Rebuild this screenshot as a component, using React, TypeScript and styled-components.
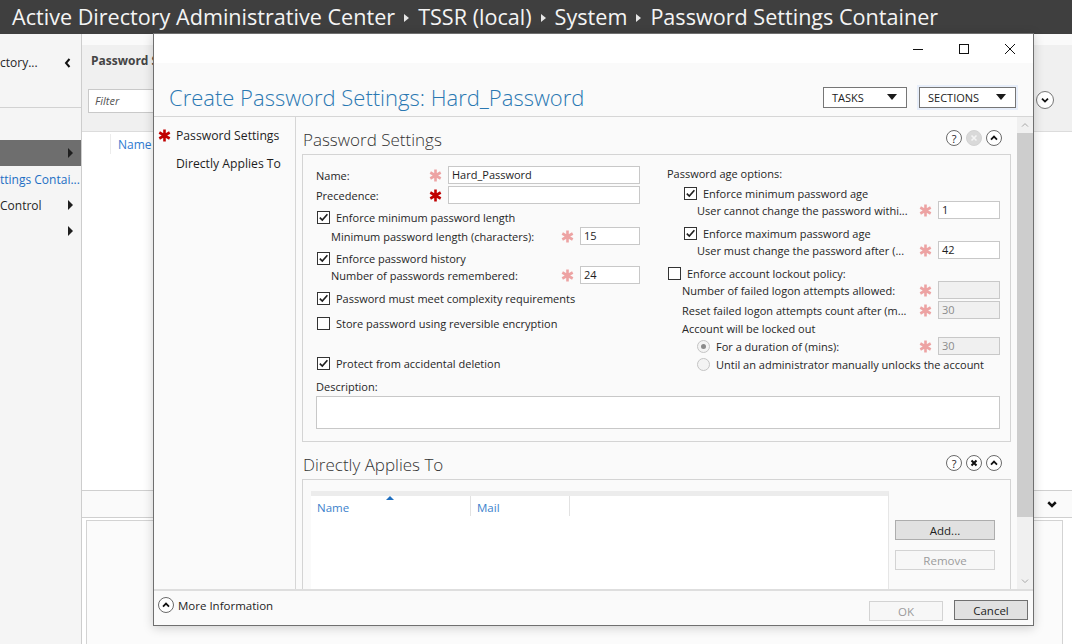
import React from "react";
import styled, { createGlobalStyle } from "styled-components";

const SANS = `"Open Sans", "Noto Sans", "Liberation Sans", sans-serif`;

const GlobalStyle = createGlobalStyle`
  * { box-sizing: border-box; }
  html, body { margin: 0; padding: 0; }
  body { font-family: ${SANS}; font-size: 11px; color: #262626; background: #f5f5f5; overflow: hidden; }
  #root { width: 1072px; height: 644px; }
`;

const Screen = styled.div`
  position: relative;
  width: 1072px;
  height: 644px;
  overflow: hidden;
  display: flex;
  flex-direction: column;
  background: #f5f5f5;
`;

/* ---------- top breadcrumb bar ---------- */
const TopBar = styled.header`
  height: 34px;
  flex: none;
  background: #3f3f3f;
  color: #f4f4f4;
  display: flex;
  align-items: center;
  padding-left: 12px;
  font-size: 21.6px;
  white-space: nowrap;
`;
const Crumb = styled.span`
  line-height: 34px;
`;
const CrumbCaret = styled.span`
  width: 0;
  height: 0;
  border-top: 4px solid transparent;
  border-bottom: 4px solid transparent;
  border-left: 5px solid #e6e6e6;
  margin: 2px 9px 0 9px;
`;

/* ---------- background console ---------- */
const Body = styled.div`
  flex: 1;
  display: flex;
  min-height: 0;
`;
const NavPane = styled.nav`
  width: 82px;
  flex: none;
  background: #f5f5f5;
  border-right: 1px solid #cdcdcd;
  display: flex;
  flex-direction: column;
  font-size: 12px;
`;
const NavHead = styled.div`
  height: 74px;
  border-bottom: 1px solid #d2d2d2;
  display: flex;
  justify-content: space-between;
  align-items: flex-start;
  padding: 20px 9px 0 0;
  margin-bottom: 32px;
  line-height: 18px;
  white-space: nowrap;
`;
const NavItem = styled.div<{ $selected?: boolean; $link?: boolean }>`
  height: 26px;
  display: flex;
  align-items: center;
  justify-content: space-between;
  padding-right: 8px;
  white-space: nowrap;
  overflow: hidden;
  background: ${(p) => (p.$selected ? "#6e6e6e" : "transparent")};
  color: ${(p) => (p.$link ? "#1d6fc4" : "#262626")};
`;
const NavCaret = styled.span`
  width: 0;
  height: 0;
  flex: none;
  border-top: 5px solid transparent;
  border-bottom: 5px solid transparent;
  border-left: 5px solid #1e1e1e;
`;
const MainPane = styled.section`
  flex: 1;
  min-width: 0;
  display: flex;
  flex-direction: column;
  background: #fff;
`;
const MainTitle = styled.div`
  height: 41px;
  flex: none;
  background: #f0f0f0;
  border-top: 11px solid #fafafa;
  padding-left: 9px;
  font-weight: 700;
  font-size: 12px;
  color: #444;
  display: flex;
  align-items: center;
`;
const FilterRow = styled.div`
  height: 57px;
  flex: none;
  background: #f0f0f0;
  border-bottom: 1px solid #dcdcdc;
  display: flex;
  justify-content: space-between;
  align-items: flex-start;
  padding: 14px 18px 0 6px;
`;
const FilterBox = styled.div`
  width: 300px;
  height: 24px;
  background: #fff;
  border: 1px solid #c9c9c9;
  font-style: italic;
  color: #555;
  padding-left: 6px;
  line-height: 22px;
`;
const ExpandCircle = styled.span`
  width: 18px;
  height: 18px;
  margin-top: 2px;
  border-radius: 50%;
  border: 1px solid #777;
  background: #fff;
  display: flex;
  align-items: center;
  justify-content: center;
`;
const ListHead = styled.div`
  height: 24px;
  flex: none;
  display: flex;
  align-items: center;
  font-size: 12px;
  color: #2f7bd0;
`;
const IconCol = styled.span`
  width: 29px;
  height: 20px;
  border-right: 1px solid #ececec;
  margin-right: 7px;
`;
const ListBody = styled.div`
  flex: 1;
`;
const DetailSection = styled.div`
  height: 154px;
  flex: none;
  border-top: 1px solid #cfcfcf;
  display: flex;
  flex-direction: column;
`;
const DetailBar = styled.div`
  height: 27px;
  flex: none;
  background: #fafafa;
  border-bottom: 1px solid #cfcfcf;
  display: flex;
  align-items: center;
  justify-content: flex-end;
  padding-right: 15px;
`;
const PreviewBox = styled.div`
  flex: 1;
  margin: 2px 9px 0 4px;
  border: 1px solid #d3d3d3;
  border-bottom: none;
  background: #fbfbfb;
`;

/* ---------- dialog ---------- */
const Dialog = styled.div`
  position: absolute;
  left: 153px;
  top: 33px;
  width: 881px;
  height: 593px;
  background: #fafafa;
  border: 1px solid #6f6f6f;
  display: flex;
  flex-direction: column;
  box-shadow: 0 2px 10px rgba(0, 0, 0, 0.18);
`;
const TitleBar = styled.div`
  height: 29px;
  flex: none;
  background: #fff;
  display: flex;
  justify-content: flex-end;
`;
const WinButton = styled.span`
  width: 46px;
  height: 29px;
  display: flex;
  align-items: center;
  justify-content: center;
`;
const DlgHeader = styled.div`
  height: 54px;
  flex: none;
  border-bottom: 1px solid #d6d6d6;
  padding: 15px 15px 0 15px;
  display: flex;
  justify-content: space-between;
  align-items: flex-start;
`;
const DlgTitle = styled.h1`
  margin: 0;
  font-size: 22px;
  font-weight: 300;
  line-height: 38px;
  color: #2a78b2;
  white-space: nowrap;
`;
const HeaderTools = styled.div`
  display: flex;
  align-items: center;
  height: 38px;
  gap: 10px;
`;
const DropButton = styled.span<{ $w: number }>`
  width: ${(p) => p.$w}px;
  height: 21px;
  border: 1px solid #767676;
  background: #fff;
  display: flex;
  align-items: center;
  justify-content: space-between;
  padding: 0 9px 0 8px;
  font-size: 11px;
  text-transform: uppercase;
  color: #222;
`;
const DropFocus = styled.span`
  padding: 2px;
  background: #e7eefa;
  display: flex;
`;
const DropTriangle = styled.span`
  width: 0;
  height: 0;
  border-left: 5px solid transparent;
  border-right: 5px solid transparent;
  border-top: 6px solid #1a1a1a;
`;
const DlgMain = styled.div`
  flex: 1;
  min-height: 0;
  display: flex;
`;
const DlgNav = styled.nav`
  width: 142px;
  flex: none;
  border-right: 1px solid #d6d6d6;
  padding-top: 4px;
  font-size: 12.2px;
`;
const DlgNavLink = styled.div`
  height: 28px;
  display: grid;
  grid-template-columns: 22px 1fr;
  align-items: center;
  white-space: nowrap;
  color: #1e1e1e;
`;
const NavStarSlot = styled.span`
  display: flex;
  justify-content: flex-end;
  padding-right: 5px;
`;
const Content = styled.div`
  flex: 1;
  min-width: 0;
  overflow: hidden;
  padding: 0 6px;
  display: flex;
  flex-direction: column;
`;
const SectionHead = styled.div`
  height: 37px;
  flex: none;
  display: flex;
  justify-content: space-between;
  align-items: flex-start;
  padding: 10px 9px 0 1px;
`;
const SectionTitle = styled.h2`
  margin: 0;
  font-size: 17px;
  font-weight: 300;
  line-height: 26px;
  color: #333;
  white-space: nowrap;
`;
const HeadIcons = styled.div`
  display: flex;
  gap: 4px;
  margin-top: 3px;
`;
const RoundIcon = styled.span<{ $disabled?: boolean }>`
  width: 16px;
  height: 16px;
  border-radius: 50%;
  border: 1px solid ${(p) => (p.$disabled ? "#d3d3d3" : "#6a6a6a")};
  background: ${(p) => (p.$disabled ? "#d9d9d9" : "#fff")};
  display: flex;
  align-items: center;
  justify-content: center;
  font-size: 11px;
  line-height: 1;
  color: #222;
`;
const SectionBox = styled.div`
  flex: none;
  border: 1px solid #d4d4d4;
  padding: 11px 10px 12px 13px;
`;
const FormGrid = styled.div`
  display: grid;
  grid-template-columns: 324px 333px;
  column-gap: 27px;
  align-items: start;
`;
const Col = styled.div`
  display: flex;
  flex-direction: column;
`;
const FieldRow = styled.div<{ $mt?: number; $indent?: number }>`
  height: 18px;
  margin-top: ${(p) => p.$mt ?? 0}px;
  padding-left: ${(p) => p.$indent ?? 0}px;
  display: flex;
  align-items: center;
`;
const FieldLabel = styled.span`
  flex: 1;
  min-width: 0;
  white-space: nowrap;
  overflow: hidden;
`;
const StarSlot = styled.span`
  width: 14px;
  flex: none;
  margin-right: 6px;
  display: flex;
  justify-content: center;
`;
const Field = styled.span<{ $w: number; $disabled?: boolean }>`
  width: ${(p) => p.$w}px;
  height: 18px;
  flex: none;
  border: 1px solid #c8c8c8;
  background: ${(p) => (p.$disabled ? "#f0f0f0" : "#fff")};
  color: ${(p) => (p.$disabled ? "#8c8c8c" : "#1e1e1e")};
  padding-left: 3px;
  line-height: 16px;
  white-space: nowrap;
`;
const CheckRow = styled.div<{ $mt?: number; $indent?: number }>`
  height: 16px;
  margin-top: ${(p) => p.$mt ?? 0}px;
  padding-left: ${(p) => p.$indent ?? 0}px;
  display: flex;
  align-items: center;
  gap: 6px;
  white-space: nowrap;
`;
const RadioRow = styled(CheckRow)`
  gap: 0;
`;
const TextRow = styled.div<{ $mt?: number; $indent?: number }>`
  height: 16px;
  margin-top: ${(p) => p.$mt ?? 0}px;
  padding-left: ${(p) => p.$indent ?? 0}px;
  line-height: 16px;
  white-space: nowrap;
`;
const Box = styled.span`
  width: 13px;
  height: 13px;
  flex: none;
  border: 1px solid #333;
  background: #fff;
  display: flex;
  align-items: center;
  justify-content: center;
`;
const RadioDot = styled.span<{ $on?: boolean }>`
  width: 13px;
  height: 13px;
  flex: none;
  border-radius: 50%;
  border: 1px solid #c4c4c4;
  background: #f3f3f3;
  margin-right: 6px;
  display: flex;
  align-items: center;
  justify-content: center;
  &::after {
    content: "";
    width: 5px;
    height: 5px;
    border-radius: 50%;
    background: ${(p) => (p.$on ? "#8a8a8a" : "transparent")};
  }
`;
const DescLabel = styled.div`
  margin-top: 8px;
  height: 14px;
  line-height: 14px;
`;
const DescBox = styled.div`
  margin-top: 2px;
  height: 33px;
  border: 1px solid #c8c8c8;
  background: #fff;
`;
const AppliesBox = styled.div`
  flex: 1;
  border: 1px solid #d4d4d4;
  border-bottom: none;
  padding: 11px 0 0 8px;
  display: flex;
  gap: 6px;
`;
const Grid = styled.div`
  width: 578px;
  flex: none;
  border-top: 5px solid #ececec;
  border-right: 1px solid #e6e6e6;
  background: #fff;
`;
const GridHead = styled.div`
  height: 24px;
  display: flex;
  color: #3c82cc;
  font-size: 11.5px;
`;
const GridCol = styled.span<{ $w: number }>`
  position: relative;
  width: ${(p) => p.$w}px;
  height: 20px;
  border-right: 1px solid #e2e2e2;
  padding: 4px 0 0 6px;
`;
const SortArrow = styled.span`
  position: absolute;
  top: 0;
  left: 75px;
  width: 0;
  height: 0;
  border-left: 4px solid transparent;
  border-right: 4px solid transparent;
  border-bottom: 4px solid #1f6fc0;
`;
const SideButtons = styled.div`
  display: flex;
  flex-direction: column;
  gap: 10px;
  margin-top: 29px;
`;
const PushButton = styled.span<{ $w: number; $disabled?: boolean; $default?: boolean }>`
  width: ${(p) => p.$w}px;
  height: 20px;
  border: 1px solid ${(p) => (p.$disabled ? "#d3d3d3" : p.$default ? "#707070" : "#adadad")};
  background: ${(p) => (p.$disabled ? "#f7f7f7" : "#e1e1e1")};
  color: ${(p) => (p.$disabled ? "#9b9b9b" : "#1e1e1e")};
  display: flex;
  align-items: center;
  justify-content: center;
  font-size: 11.5px;
`;
const ScrollBar = styled.div`
  width: 16px;
  flex: none;
  background: #f0f0f0;
  display: flex;
  flex-direction: column;
`;
const ScrollArrow = styled.span`
  height: 16px;
  flex: none;
  display: flex;
  align-items: center;
  justify-content: center;
`;
const ScrollThumb = styled.span`
  height: 384px;
  flex: none;
  background: #cdcdcd;
`;
const ScrollSpacer = styled.span`
  flex: 1;
`;
const Footer = styled.div`
  height: 36px;
  flex: none;
  border-top: 2px solid #dedede;
  background: #fafafa;
  display: flex;
  justify-content: space-between;
  align-items: flex-start;
  padding: 0 5px 0 4px;
`;
const MoreInfo = styled.div`
  margin-top: 6px;
  display: flex;
  align-items: center;
  gap: 4px;
  font-size: 11.5px;
  color: #1e1e1e;
`;
const FooterButtons = styled.div`
  margin-top: 9px;
  display: flex;
  align-items: flex-start;
  gap: 11px;
`;
const OkSlot = styled.span`
  margin-top: 1px;
  display: flex;
`;

/* ---------- icons ---------- */
const StarSvg = styled.svg<{ $strong?: boolean }>`
  width: 13px;
  height: 13px;
  stroke: ${(p) => (p.$strong ? "#c00000" : "#eda3a3")};
  stroke-width: 2.6;
  stroke-linecap: butt;
  fill: none;
`;
const Star = ({ strong }: { strong?: boolean }) => (
  <StarSvg viewBox="0 0 13 13" $strong={strong}>
    <path d="M6.5 0.5V12.5M1.3 3.5L11.7 9.5M11.7 3.5L1.3 9.5" />
  </StarSvg>
);

const Check = ({ on }: { on?: boolean }) => (
  <Box>
    {on && (
      <svg width="11" height="11" viewBox="0 0 11 11">
        <path d="M1.8 5.6 L4.3 8.1 L9.4 2.3" stroke="#1e1e1e" strokeWidth="1.6" fill="none" />
      </svg>
    )}
  </Box>
);

const ChevronUp = ({ size = 8, color = "#111", w = 1.8 }: { size?: number; color?: string; w?: number }) => (
  <svg width={size} height={size} viewBox="0 0 8 8">
    <path d="M1 5.6 L4 2.6 L7 5.6" stroke={color} strokeWidth={w} fill="none" />
  </svg>
);
const ChevronDown = ({ size = 8, color = "#111", w = 1.8 }: { size?: number; color?: string; w?: number }) => (
  <svg width={size} height={size} viewBox="0 0 8 8">
    <path d="M1 2.6 L4 5.6 L7 2.6" stroke={color} strokeWidth={w} fill="none" />
  </svg>
);
const XMark = ({ color = "#111", w = 1.8 }: { color?: string; w?: number }) => (
  <svg width="8" height="8" viewBox="0 0 8 8">
    <path d="M1.5 1.5 L6.5 6.5 M6.5 1.5 L1.5 6.5" stroke={color} strokeWidth={w} fill="none" />
  </svg>
);

const SectionIcons = ({ closeDisabled }: { closeDisabled?: boolean }) => (
  <HeadIcons>
    <RoundIcon>?</RoundIcon>
    <RoundIcon $disabled={closeDisabled}>
      <XMark color={closeDisabled ? "#f4f4f4" : "#111"} w={closeDisabled ? 1.6 : 2} />
    </RoundIcon>
    <RoundIcon>
      <ChevronUp />
    </RoundIcon>
  </HeadIcons>
);

export default function App() {
  return (
    <>
      <GlobalStyle />
      <Screen>
        <TopBar>
          <Crumb>Active Directory Administrative Center</Crumb>
          <CrumbCaret />
          <Crumb>TSSR (local)</Crumb>
          <CrumbCaret />
          <Crumb>System</Crumb>
          <CrumbCaret />
          <Crumb>Password Settings Container</Crumb>
        </TopBar>
        <Body>
          <NavPane>
            <NavHead>
              <span>ctory...</span>
              <svg width="8" height="18" viewBox="0 0 8 18">
                <path d="M5.5 5 L2 9 L5.5 13" stroke="#111" strokeWidth="2" fill="none" />
              </svg>
            </NavHead>
            <NavItem $selected>
              <span />
              <NavCaret />
            </NavItem>
            <NavItem $link>
              <span>ttings Contai...</span>
            </NavItem>
            <NavItem>
              <span>Control</span>
              <NavCaret />
            </NavItem>
            <NavItem>
              <span />
              <NavCaret />
            </NavItem>
          </NavPane>
          <MainPane>
            <MainTitle>Password Settings Container (0)</MainTitle>
            <FilterRow>
              <FilterBox>Filter</FilterBox>
              <ExpandCircle>
                <ChevronDown />
              </ExpandCircle>
            </FilterRow>
            <ListHead>
              <IconCol />
              <span>Name</span>
            </ListHead>
            <ListBody />
            <DetailSection>
              <DetailBar>
                <ChevronDown size={10} w={2} />
              </DetailBar>
              <PreviewBox />
            </DetailSection>
          </MainPane>
        </Body>

        <Dialog>
          <TitleBar>
            <WinButton>
              <svg width="10" height="10" viewBox="0 0 10 10">
                <path d="M0 5.5 H10" stroke="#111" strokeWidth="1" />
              </svg>
            </WinButton>
            <WinButton>
              <svg width="10" height="10" viewBox="0 0 10 10">
                <rect x="0.5" y="0.5" width="9" height="9" stroke="#111" strokeWidth="1" fill="none" />
              </svg>
            </WinButton>
            <WinButton>
              <svg width="10" height="10" viewBox="0 0 10 10">
                <path d="M0 0 L10 10 M10 0 L0 10" stroke="#111" strokeWidth="1" />
              </svg>
            </WinButton>
          </TitleBar>
          <DlgHeader>
            <DlgTitle>Create Password Settings: Hard_Password</DlgTitle>
            <HeaderTools>
              <DropButton $w={84}>
                <span>Tasks</span>
                <DropTriangle />
              </DropButton>
              <DropFocus>
                <DropButton $w={97}>
                  <span>Sections</span>
                  <DropTriangle />
                </DropButton>
              </DropFocus>
            </HeaderTools>
          </DlgHeader>
          <DlgMain>
            <DlgNav>
              <DlgNavLink>
                <NavStarSlot>
                  <Star strong />
                </NavStarSlot>
                <span>Password Settings</span>
              </DlgNavLink>
              <DlgNavLink>
                <span />
                <span>Directly Applies To</span>
              </DlgNavLink>
            </DlgNav>
            <Content>
              <SectionHead>
                <SectionTitle>Password Settings</SectionTitle>
                <SectionIcons closeDisabled />
              </SectionHead>
              <SectionBox>
                <FormGrid>
                  <Col>
                    <FieldRow>
                      <FieldLabel>Name:</FieldLabel>
                      <StarSlot>
                        <Star />
                      </StarSlot>
                      <Field $w={192}>Hard_Password</Field>
                    </FieldRow>
                    <FieldRow $mt={2}>
                      <FieldLabel>Precedence:</FieldLabel>
                      <StarSlot>
                        <Star strong />
                      </StarSlot>
                      <Field $w={192} />
                    </FieldRow>
                    <CheckRow $mt={5} $indent={1}>
                      <Check on />
                      <span>Enforce minimum password length</span>
                    </CheckRow>
                    <FieldRow $mt={2} $indent={15}>
                      <FieldLabel>Minimum password length (characters):</FieldLabel>
                      <StarSlot>
                        <Star />
                      </StarSlot>
                      <Field $w={60}>15</Field>
                    </FieldRow>
                    <CheckRow $mt={5} $indent={1}>
                      <Check on />
                      <span>Enforce password history</span>
                    </CheckRow>
                    <FieldRow $indent={15}>
                      <FieldLabel>Number of passwords remembered:</FieldLabel>
                      <StarSlot>
                        <Star />
                      </StarSlot>
                      <Field $w={60}>24</Field>
                    </FieldRow>
                    <CheckRow $mt={6} $indent={1}>
                      <Check on />
                      <span>Password must meet complexity requirements</span>
                    </CheckRow>
                    <CheckRow $mt={9} $indent={1}>
                      <Check />
                      <span>Store password using reversible encryption</span>
                    </CheckRow>
                    <CheckRow $mt={24} $indent={1}>
                      <Check on />
                      <span>Protect from accidental deletion</span>
                    </CheckRow>
                  </Col>
                  <Col>
                    <TextRow>Password age options:</TextRow>
                    <CheckRow $mt={3} $indent={17}>
                      <Check on />
                      <span>Enforce minimum password age</span>
                    </CheckRow>
                    <FieldRow $indent={30}>
                      <FieldLabel>User cannot change the password withi...</FieldLabel>
                      <StarSlot>
                        <Star />
                      </StarSlot>
                      <Field $w={62}>1</Field>
                    </FieldRow>
                    <CheckRow $mt={6} $indent={17}>
                      <Check on />
                      <span>Enforce maximum password age</span>
                    </CheckRow>
                    <FieldRow $indent={30}>
                      <FieldLabel>User must change the password after (...</FieldLabel>
                      <StarSlot>
                        <Star />
                      </StarSlot>
                      <Field $w={62}>42</Field>
                    </FieldRow>
                    <CheckRow $mt={6} $indent={1}>
                      <Check />
                      <span>Enforce account lockout policy:</span>
                    </CheckRow>
                    <FieldRow $indent={15}>
                      <FieldLabel>Number of failed logon attempts allowed:</FieldLabel>
                      <StarSlot>
                        <Star />
                      </StarSlot>
                      <Field $w={62} $disabled />
                    </FieldRow>
                    <FieldRow $mt={2} $indent={15}>
                      <FieldLabel>Reset failed logon attempts count after (m...</FieldLabel>
                      <StarSlot>
                        <Star />
                      </StarSlot>
                      <Field $w={62} $disabled>
                        30
                      </Field>
                    </FieldRow>
                    <TextRow $mt={2} $indent={15}>
                      Account will be locked out
                    </TextRow>
                    <FieldRow $indent={30}>
                      <RadioDot $on />
                      <FieldLabel>For a duration of (mins):</FieldLabel>
                      <StarSlot>
                        <Star />
                      </StarSlot>
                      <Field $w={62} $disabled>
                        30
                      </Field>
                    </FieldRow>
                    <RadioRow $mt={1} $indent={30}>
                      <RadioDot />
                      <span>Until an administrator manually unlocks the account</span>
                    </RadioRow>
                  </Col>
                </FormGrid>
                <DescLabel>Description:</DescLabel>
                <DescBox />
              </SectionBox>

              <SectionHead>
                <SectionTitle>Directly Applies To</SectionTitle>
                <SectionIcons />
              </SectionHead>
              <AppliesBox>
                <Grid>
                  <GridHead>
                    <GridCol $w={160}>
                      Name
                      <SortArrow />
                    </GridCol>
                    <GridCol $w={99}>Mail</GridCol>
                  </GridHead>
                </Grid>
                <SideButtons>
                  <PushButton $w={100}>Add...</PushButton>
                  <PushButton $w={100} $disabled>
                    Remove
                  </PushButton>
                </SideButtons>
              </AppliesBox>
            </Content>
            <ScrollBar>
              <ScrollArrow>
                <ChevronUp color="#a8a8a8" w={1} />
              </ScrollArrow>
              <ScrollThumb />
              <ScrollSpacer />
              <ScrollArrow>
                <ChevronDown color="#a8a8a8" w={1} />
              </ScrollArrow>
            </ScrollBar>
          </DlgMain>
          <Footer>
            <MoreInfo>
              <RoundIcon>
                <ChevronUp />
              </RoundIcon>
              <span>More Information</span>
            </MoreInfo>
            <FooterButtons>
              <OkSlot>
                <PushButton $w={74} $disabled>
                  OK
                </PushButton>
              </OkSlot>
              <PushButton $w={74} $default>
                Cancel
              </PushButton>
            </FooterButtons>
          </Footer>
        </Dialog>
      </Screen>
    </>
  );
}
